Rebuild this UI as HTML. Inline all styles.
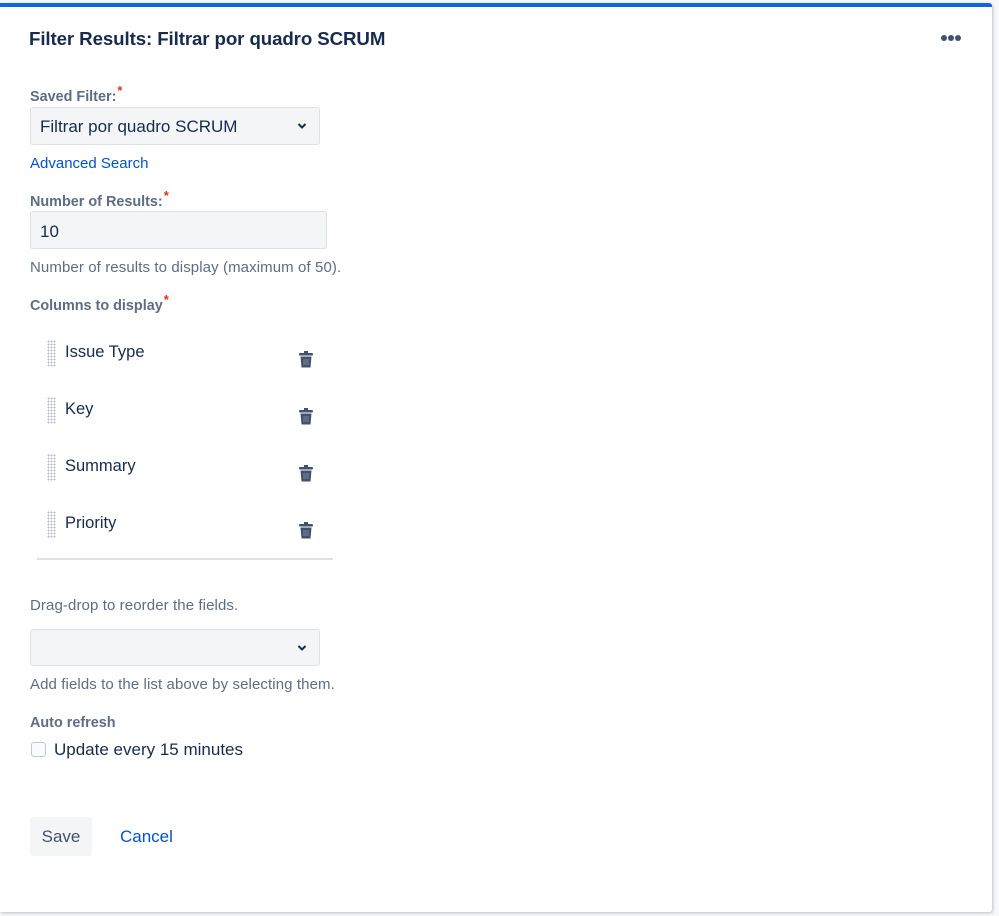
<!DOCTYPE html>
<html><head><meta charset="utf-8"><style>
*{margin:0;padding:0;box-sizing:border-box}
body{width:999px;height:916px;background:#f7f8fa;font-family:"Liberation Sans",sans-serif;position:relative;overflow:hidden;color:#172b4d}
.card{position:absolute;left:0;top:3px;width:992px;height:909px;background:#fff;border-top:4px solid #0c66e4;border-radius:0 3px 3px 0;box-shadow:1px 1px 3px rgba(9,30,66,.25)}
.a{position:absolute;white-space:nowrap}
.lbl{font-size:14.4px;font-weight:bold;color:#5e6c84}
.req{color:#de350b;font-size:13px;position:relative;top:-6px;margin-left:1px}
.help{font-size:15px;color:#5e6c84;letter-spacing:0.1px}
.field{position:absolute;background:#f4f5f7;border:1px solid #dfe1e6;border-radius:3px}
.chev{position:absolute;right:12px;top:14px}
.handle{position:absolute;width:9px;height:27px;background-image:radial-gradient(circle,#b3bac5 0.8px,transparent 1px);background-size:3px 3px}
.item{font-size:16.5px;color:#172b4d}
</style></head><body>
<div class="card"></div>
<div class="a" style="left:29px;top:28px;font-size:18.7px;font-weight:bold;color:#172b4d;letter-spacing:-0.1px">Filter Results: Filtrar por quadro SCRUM</div>
<div class="a" style="left:941px;top:35px;width:6px;height:6px;border-radius:50%;background:#42526e"></div>
<div class="a" style="left:948px;top:35px;width:6px;height:6px;border-radius:50%;background:#42526e"></div>
<div class="a" style="left:955px;top:35px;width:6px;height:6px;border-radius:50%;background:#42526e"></div>

<div class="a lbl" style="left:30px;top:89px">Saved Filter:<span class="req">*</span></div>
<div class="field" style="left:30px;top:107px;width:290px;height:38px"><span class="a" style="left:9px;top:9px;font-size:17px;color:#172b4d">Filtrar por quadro SCRUM</span>
<svg class="chev" width="10" height="8" viewBox="0 0 10 8"><path d="M1.5 2l3.5 3.5L8.5 2" fill="none" stroke="#172b4d" stroke-width="2"/></svg></div>
<div class="a" style="left:30px;top:155px;font-size:15px;color:#0052cc">Advanced Search</div>

<div class="a lbl" style="left:30px;top:194px">Number of Results:<span class="req">*</span></div>
<div class="field" style="left:30px;top:211px;width:297px;height:38px"><span class="a" style="left:9px;top:10px;font-size:17px;color:#172b4d">10</span></div>
<div class="a help" style="left:30px;top:259px">Number of results to display (maximum of 50).</div>

<div class="a lbl" style="left:30px;top:298px">Columns to display<span class="req">*</span></div>

<div class="handle" style="left:47px;top:340px"></div><div class="a item" style="left:65px;top:343px">Issue Type</div>
<div class="handle" style="left:47px;top:397px"></div><div class="a item" style="left:65px;top:400px">Key</div>
<div class="handle" style="left:47px;top:454px"></div><div class="a item" style="left:65px;top:457px">Summary</div>
<div class="handle" style="left:47px;top:511px"></div><div class="a item" style="left:65px;top:514px">Priority</div>

<svg class="a" style="left:299px;top:351px" width="14" height="17" viewBox="0 0 14 17"><rect x="0" y="2" width="14" height="2.5" rx="1" fill="#42526e"/><rect x="5" y="0" width="4" height="2" fill="#42526e"/><path d="M1.5 5.5h11l-1 11h-9z" fill="#42526e"/><path d="M5 8v6M7 8v6M9 8v6" stroke="#8993a4" stroke-width="0.8"/></svg>
<svg class="a" style="left:299px;top:408px" width="14" height="17" viewBox="0 0 14 17"><rect x="0" y="2" width="14" height="2.5" rx="1" fill="#42526e"/><rect x="5" y="0" width="4" height="2" fill="#42526e"/><path d="M1.5 5.5h11l-1 11h-9z" fill="#42526e"/><path d="M5 8v6M7 8v6M9 8v6" stroke="#8993a4" stroke-width="0.8"/></svg>
<svg class="a" style="left:299px;top:465px" width="14" height="17" viewBox="0 0 14 17"><rect x="0" y="2" width="14" height="2.5" rx="1" fill="#42526e"/><rect x="5" y="0" width="4" height="2" fill="#42526e"/><path d="M1.5 5.5h11l-1 11h-9z" fill="#42526e"/><path d="M5 8v6M7 8v6M9 8v6" stroke="#8993a4" stroke-width="0.8"/></svg>
<svg class="a" style="left:299px;top:522px" width="14" height="17" viewBox="0 0 14 17"><rect x="0" y="2" width="14" height="2.5" rx="1" fill="#42526e"/><rect x="5" y="0" width="4" height="2" fill="#42526e"/><path d="M1.5 5.5h11l-1 11h-9z" fill="#42526e"/><path d="M5 8v6M7 8v6M9 8v6" stroke="#8993a4" stroke-width="0.8"/></svg>

<div class="a" style="left:37px;top:558px;width:296px;height:2px;background:#dfe1e6"></div>

<div class="a help" style="left:30px;top:597px">Drag-drop to reorder the fields.</div>
<div class="field" style="left:30px;top:629px;width:290px;height:37px">
<svg class="chev" width="10" height="8" viewBox="0 0 10 8"><path d="M1.5 2l3.5 3.5L8.5 2" fill="none" stroke="#172b4d" stroke-width="2"/></svg></div>
<div class="a help" style="left:30px;top:676px">Add fields to the list above by selecting them.</div>

<div class="a lbl" style="left:30px;top:715px">Auto refresh</div>
<div class="a" style="left:31px;top:742px;width:15px;height:15px;border:1.5px solid #c1c7d0;border-radius:3px;background:#fafbfc"></div>
<div class="a" style="left:54px;top:740px;font-size:17px;color:#172b4d">Update every 15 minutes</div>

<div class="a" style="left:30px;top:817px;width:62px;height:39px;background:#f4f5f7;border-radius:3px;font-size:17px;color:#42526e;text-align:center;line-height:40px">Save</div>
<div class="a" style="left:120px;top:827px;font-size:17px;color:#0052cc">Cancel</div>
</body></html>
